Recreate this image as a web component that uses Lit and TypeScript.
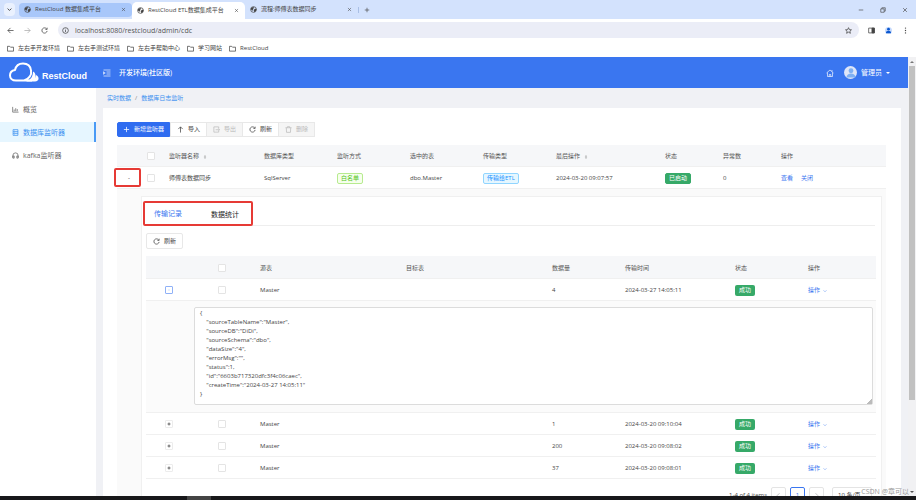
import { LitElement, html, css, svg, nothing } from "lit";
import { customElement } from "lit/decorators.js";
import { classMap } from "lit/directives/class-map.js";

const paths: Record<string, unknown> = {
  down: svg`<path d="M2 5l6 6 6-6"/>`,
  close: svg`<path d="M3 3l10 10M13 3L3 13"/>`,
  plus: svg`<path d="M8 2v12M2 8h12"/>`,
  minus: svg`<path d="M2 8h12"/>`,
  restore: svg`<path d="M2 5h9v9H2zM5 5V2h9v9h-3"/>`,
  back: svg`<path d="M15 8H2M8 2L2 8l6 6"/>`,
  forward: svg`<path d="M1 8h13M8 2l6 6-6 6"/>`,
  up: svg`<path d="M8 15V2M3 7l5-5 5 5"/>`,
  reload: svg`<path d="M13 4.500A6 6 0 1 0 14 9M14 1.500v4h-4"/>`,
  info: svg`<circle cx="8" cy="8" r="6.500"/><path d="M8 7v4.500M8 4v1.500"/>`,
  star: svg`<path d="M8 1.500l2 4.500 4.800.400-3.600 3.200 1.100 4.800L8 11.800l-4.300 2.600 1.100-4.800L1.200 6.400 6 6z"/>`,
  panel: svg`<path d="M1.500 2.500h13v11h-13z"/><path d="M9 2.500h5.500v11H9z" fill="currentColor"/>`,
  dots: svg`<g fill="currentColor" stroke="none"><circle cx="8" cy="2.500" r="1.600"/><circle cx="8" cy="8" r="1.600"/><circle cx="8" cy="13.500" r="1.600"/></g>`,
  folder: svg`<path d="M1 3h5l2 2h7v9H1z"/>`,
  globe: svg`<circle cx="8" cy="8" r="6.500"/><path fill="currentColor" stroke="none" d="M2 5l5-3 2 1-1 3-2 1 2 2-1 2-3-2-2-1zM10 7l5-1-1 5-4 3-1-3z"/>`,
  user: svg`<g fill="currentColor" stroke="none"><circle cx="8" cy="5" r="3.200"/><path d="M2 14c0-7 12-7 12 0z"/></g>`,
  indent: svg`<path d="M1 2h14M7 6h8M7 10h8M1 14h14M1 5.500L4.500 8 1 10.500z"/>`,
  home: svg`<path d="M1 8l7-6 7 6M3 7v8h10V7M6.500 15v-4h3v4M12 5V2"/>`,
  chart: svg`<path d="M1.500 2v12H15M5 12V8M8.500 12V5M12 12V7"/>`,
  db: svg`<path d="M2.500 1.500h11v13h-11zM2.500 6h11M2.500 10h11M5 4h1M5 8h1M5 12.500h1"/>`,
  headset: svg`<path d="M2 13V8a6 6 0 0 1 12 0v5M2 9h3v5H2zM11 9h3v5h-3z"/>`,
  exporter: svg`<path d="M13 6V2H2v12h11v-3M6 8.500h9M12.500 6L15 8.500 12.500 11"/>`,
  trash: svg`<path d="M1 4h14M5.500 4V1.500h5V4M3 4l.500 10.500h9L13 4"/>`,
  sort: svg`<g fill="currentColor" stroke="none"><path d="M3 6l5-5 5 5zM3 10l5 5 5-5z"/></g>`,
  left: svg`<path d="M10 3L5 8l5 5"/>`,
  right: svg`<path d="M6 3l5 5-5 5"/>`,
};

const icon = (name: string) =>
  html`<svg class="icon" viewBox="0 0 16 16" aria-hidden="true">${paths[name]}</svg>`;

const shared = css`
  * {
    box-sizing: border-box;
  }
  button,
  input,
  select,
  textarea {
    font: inherit;
    color: inherit;
    margin: 0;
    padding: 0;
    border: 0;
    background: none;
  }
  a {
    color: inherit;
    text-decoration: none;
  }
  .icon {
    width: 7px;
    height: 7px;
    flex: none;
    fill: none;
    stroke: currentColor;
    stroke-width: 1.7;
    display: block;
  }
`;

@customElement("browser-chrome")
class BrowserChrome extends LitElement {
  static styles = [
    shared,
    css`
      :host {
        display: block;
        background: #fff;
        color: #444;
      }
      .strip {
        display: flex;
        align-items: center;
        height: 19px;
        background: #d3e2fd;
        padding: 0 8px 0 4px;
      }
      .strip button,
      .bar button {
        display: flex;
        align-items: center;
        justify-content: center;
      }
      .menu {
        width: 11px;
        height: 13px;
        border-radius: 4px;
        background: #eaf1fe;
        margin-right: 4px;
      }
      .menu .icon {
        width: 5px;
        height: 5px;
        stroke-width: 3;
      }
      .tab {
        display: flex;
        align-items: center;
        gap: 4px;
        width: 113px;
        height: 14px;
        padding: 0 6px 0 5px;
        border-radius: 4px;
        white-space: nowrap;
      }
      .tab.lit {
        background: #a8c7fa;
      }
      .tab.active {
        height: 17px;
        background: #fff;
        border-radius: 5px 5px 0 0;
        align-self: flex-end;
        padding-bottom: 1px;
      }
      .tab span {
        flex: 1;
      }
      .tab button .icon {
        width: 5px;
        height: 5px;
      }
      .new {
        border-left: 1px solid #a9bfe6;
        padding-left: 5px;
      }
      .new .icon,
      .win .icon {
        width: 6px;
        height: 6px;
      }
      .win {
        display: flex;
        gap: 16px;
        margin-left: auto;
      }
      .bar {
        display: flex;
        align-items: center;
        height: 22px;
        padding: 0 7px;
      }
      .nav {
        display: flex;
        gap: 10px;
        margin-right: 10px;
      }
      .off {
        color: #aaa;
      }
      .pill {
        flex: 1;
        display: flex;
        align-items: center;
        gap: 6px;
        height: 16px;
        padding: 0 7px 0 4px;
        border-radius: 8px;
        background: #ebedf7;
        margin-right: 9px;
      }
      .pill input {
        flex: 1;
        min-width: 0;
        font-size: 7px;
        color: #555;
        outline: 0;
      }
      .tools {
        display: flex;
        gap: 10px;
      }
      .me {
        color: #0b57d0;
        background: #c6dafc;
        border-radius: 4px;
      }
      .marks {
        display: flex;
        align-items: center;
        gap: 7px;
        height: 16px;
        padding: 0 7px 1px;
      }
      .marks a {
        display: flex;
        align-items: center;
        gap: 4px;
        white-space: nowrap;
      }
    `,
  ];

  render() {
    const tabs = [
      ["RestCloud 数据集成平台", "lit"],
      ["RestCloud ETL数据集成平台", "active"],
      ["流程:师傅表数据同步", ""],
    ];
    const marks = ["左右手开发环境", "左右手测试环境", "左右手帮助中心", "学习网站", "RestCloud"];
    return html`
      <div class="strip">
        <button class="menu" aria-label="搜索标签页">${icon("down")}</button>
        ${tabs.map(
          ([t, c]) => html`<div class="tab ${c}">
            ${icon("globe")}<span>${t}</span><button aria-label="关闭标签页">${icon("close")}</button>
          </div>`,
        )}
        <button class="new" aria-label="新标签页">${icon("plus")}</button>
        <div class="win">
          <button aria-label="最小化">${icon("minus")}</button>
          <button aria-label="还原">${icon("restore")}</button>
          <button aria-label="关闭">${icon("close")}</button>
        </div>
      </div>
      <div class="bar">
        <div class="nav">
          <button aria-label="后退">${icon("back")}</button>
          <button class="off" aria-label="前进">${icon("forward")}</button>
          <button aria-label="刷新">${icon("reload")}</button>
        </div>
        <div class="pill">
          ${icon("info")}
          <input aria-label="地址" .value=${"localhost:8080/restcloud/admin/cdc"} />
          <button aria-label="收藏">${icon("star")}</button>
        </div>
        <div class="tools">
          <button aria-label="侧边栏">${icon("panel")}</button>
          <button class="me" aria-label="用户">${icon("user")}</button>
          <button aria-label="更多">${icon("dots")}</button>
        </div>
      </div>
      <nav class="marks">${marks.map((m) => html`<a href="#">${icon("folder")}${m}</a>`)}</nav>
    `;
  }
}

@customElement("transfer-records")
class TransferRecords extends LitElement {
  static styles = [
    shared,
    css`
      :host {
        display: block;
        background: #fff;
        border: 1px solid #f0f0f0;
        padding: 0 6px 8px 4px;
      }
      .tabs {
        position: relative;
        display: flex;
        gap: 13px;
        height: 29px;
        border-bottom: 1px solid #eee;
        font-size: 7px;
      }
      .tabs button {
        padding: 5px 8px 0;
        height: 29px;
        color: #222;
      }
      .tabs .on {
        color: #3a76f0;
        border-bottom: 1px solid #3a76f0;
      }
      .mark {
        position: absolute;
        left: -3px;
        top: 4px;
        width: 110px;
        height: 25px;
        border: 2px solid #e63a35;
        border-radius: 2px;
        pointer-events: none;
      }
      .refresh {
        display: flex;
        align-items: center;
        gap: 4px;
        height: 16px;
        padding: 0 6px;
        margin: 7px 0;
        border: 1px solid #e8e8e8;
        border-radius: 2px;
      }
      table {
        width: 100%;
        table-layout: fixed;
        border-collapse: separate;
        border-spacing: 0;
      }
      th,
      td {
        height: 22px;
        padding: 2px 8px 0;
        text-align: left;
        font-weight: 400;
        border-bottom: 1px solid #f0f0f0;
      }
      th {
        height: 23px;
        background: #f6f7f9;
        color: #555;
      }
      .c {
        text-align: center;
        padding: 2px 0 0;
      }
      .w1 { width: 46px; }
      .w2 { width: 60px; }
      .w3 { width: 146px; }
      .w4 { width: 73px; }
      .w5 { width: 110px; }
      .w6 { width: 76px; }
      input[type="checkbox"] {
        appearance: none;
        width: 8px;
        height: 8px;
        border: 1px solid #e4e4e4;
        border-radius: 1px;
        background: #fff;
        vertical-align: middle;
      }
      .exp {
        display: inline-flex;
        align-items: center;
        justify-content: center;
        width: 8px;
        height: 8px;
        border: 1px solid #ececec;
        border-radius: 1px;
        vertical-align: middle;
      }
      .exp.open {
        border-color: #8fb1f7;
        color: #6a96f4;
      }
      .exp .icon {
        width: 4px;
        height: 4px;
        stroke-width: 3;
      }
      .exp.open .icon {
        width: 2px;
      }
      .tag {
        display: inline-block;
        height: 11px;
        line-height: 11px;
        padding: 0 4px;
        border-radius: 2px;
        background: #36a968;
        color: #fff;
        vertical-align: middle;
      }
      .op {
        display: inline-flex;
        align-items: center;
        gap: 3px;
        color: #3a76f0;
      }
      .op .icon {
        width: 4px;
        height: 4px;
      }
      .detail {
        background: #fbfbfb;
        padding: 6px 3px 7px 48px;
        height: 112px;
      }
      textarea {
        display: block;
        width: 100%;
        height: 98px;
        padding: 1px 5px;
        line-height: 9px;
        border: 1px solid #dcdcdc;
        border-radius: 2px;
        background: #fff;
        outline: 0;
        overflow: hidden;
      }
      textarea::-webkit-resizer {
        background: linear-gradient(135deg, transparent 82%, #bbb 82%);
      }
      .pager {
        display: flex;
        justify-content: flex-end;
        align-items: center;
        gap: 4px;
        margin-top: 8px;
        padding-right: 3px;
      }
      .pager button {
        display: flex;
        align-items: center;
        justify-content: center;
        width: 15px;
        height: 16px;
        border: 1px solid #e4e4e4;
        border-radius: 2px;
        color: #aaa;
      }
      .pager .cur {
        border-color: #3a76f0;
        color: #3a76f0;
      }
      .pager select {
        appearance: none;
        width: 40px;
        height: 16px;
        padding: 0 5px;
        margin-left: 4px;
        border: 1px solid #e4e4e4;
        border-radius: 2px;
      }
    `,
  ];

  private record = `{
    "sourceTableName":"Master",
    "sourceDB":"DiDi",
    "sourceSchema":"dbo",
    "dataSize":"4",
    "errorMsg":"",
    "status":1,
    "id":"6603b717320dfc3f4c06caec",
    "createTime":"2024-03-27 14:05:11"
}`;

  private rows = [
    { n: 4, time: "2024-03-27 14:05:11", open: true },
    { n: 1, time: "2024-03-20 09:10:04", open: false },
    { n: 200, time: "2024-03-20 09:08:02", open: false },
    { n: 37, time: "2024-03-20 09:08:01", open: false },
  ];

  render() {
    return html`
      <div class="tabs" role="tablist">
        <button class="on" role="tab" aria-selected="true">传输记录</button>
        <button role="tab" aria-selected="false">数据统计</button>
        <span class="mark"></span>
      </div>
      <button class="refresh">${icon("reload")}刷新</button>
      <table>
        <thead>
          <tr>
            <th class="w1"></th>
            <th class="w2 c"><input type="checkbox" aria-label="全选" /></th>
            <th class="w3">源表</th>
            <th class="w3">目标表</th>
            <th class="w4">数据量</th>
            <th class="w5">传输时间</th>
            <th class="w4">状态</th>
            <th class="w6">操作</th>
          </tr>
        </thead>
        <tbody>
          ${this.rows.map(
            (r) => html`<tr>
                <td class="c">
                  <button class=${classMap({ exp: true, open: r.open })} aria-label="展开">
                    ${icon(r.open ? "minus" : "plus")}
                  </button>
                </td>
                <td class="c"><input type="checkbox" aria-label="选择" /></td>
                <td>Master</td>
                <td></td>
                <td>${r.n}</td>
                <td>${r.time}</td>
                <td><span class="tag">成功</span></td>
                <td><a class="op" href="#">操作 ${icon("down")}</a></td>
              </tr>
              ${r.open
                ? html`<tr>
                    <td class="detail" colspan="8">
                      <textarea aria-label="记录内容" .value=${this.record}></textarea>
                    </td>
                  </tr>`
                : nothing}`,
          )}
        </tbody>
      </table>
      <div class="pager">
        <span>1-4 of 4 items</span>
        <button aria-label="上一页">${icon("left")}</button>
        <button class="cur">1</button>
        <button aria-label="下一页">${icon("right")}</button>
        <select aria-label="每页条数"><option>10 条/页</option></select>
      </div>
    `;
  }
}

@customElement("listener-table")
class ListenerTable extends LitElement {
  static styles = [
    shared,
    css`
      :host {
        display: block;
      }
      .actions {
        display: flex;
        margin-bottom: 8px;
      }
      .actions button {
        display: flex;
        align-items: center;
        gap: 4px;
        height: 15px;
        padding: 0 6px;
        border: 1px solid #e8e8e8;
        margin-right: -1px;
        background: #fff;
        white-space: nowrap;
      }
      .actions .primary {
        margin: 0;
        padding: 0 5px;
        background: #2f6cf0;
        border-color: #2f6cf0;
        color: #fff;
        border-radius: 2px 0 0 2px;
      }
      .actions button:disabled {
        background: #f5f5f5;
        color: #bbb;
      }
      table {
        width: 100%;
        table-layout: fixed;
        border-collapse: separate;
        border-spacing: 0;
      }
      th,
      td {
        height: 22px;
        padding: 2px 8px 0;
        text-align: left;
        font-weight: 400;
        border-bottom: 1px solid #f0f0f0;
        white-space: nowrap;
      }
      th {
        background: #f6f7f9;
        color: #555;
      }
      .sort {
        display: inline-flex;
        align-items: center;
        gap: 4px;
      }
      .sort .icon {
        width: 4px;
        height: 6px;
        color: #999;
      }
      .w1 { width: 24px; }
      .w2 { width: 20px; }
      .w3 { width: 95px; }
      .w4 { width: 73px; }
      .w5 { width: 109px; }
      .w6 { width: 58px; }
      .w7 { width: 113px; }
      .c {
        position: relative;
        padding: 2px 0 0;
        text-align: center;
      }
      .mark {
        position: absolute;
        left: -3px;
        top: 1px;
        width: 27px;
        height: 19px;
        border: 2px solid #e63a35;
        border-radius: 2px;
        pointer-events: none;
      }
      .exp {
        width: 8px;
        height: 8px;
        line-height: 8px;
        color: #222;
      }
      input[type="checkbox"] {
        appearance: none;
        width: 8px;
        height: 8px;
        border: 1px solid #e4e4e4;
        border-radius: 1px;
        background: #fff;
        vertical-align: middle;
      }
      .tag {
        display: inline-block;
        height: 11px;
        line-height: 9px;
        padding: 0 3px;
        border: 1px solid;
        border-radius: 2px;
        vertical-align: middle;
      }
      .green {
        color: #52c41a;
        background: #f6ffed;
        border-color: #b7eb8f;
      }
      .blue {
        color: #1890ff;
        background: #e6f7ff;
        border-color: #91d5ff;
      }
      .solid {
        color: #fff;
        background: #36a968;
        border-color: #36a968;
      }
      .ops a {
        color: #3a76f0;
        margin-right: 8px;
      }
      .nest {
        background: #fafafa;
        padding: 7px 4px 7px 24px;
        white-space: normal;
      }
    `,
  ];

  render() {
    return html`
      <div class="actions">
        <button class="primary">${icon("plus")}新增监听器</button>
        <button>${icon("up")}导入</button>
        <button disabled>${icon("exporter")}导出</button>
        <button>${icon("reload")}刷新</button>
        <button disabled>${icon("trash")}删除</button>
      </div>
      <table>
        <thead>
          <tr>
            <th class="w1"></th>
            <th class="w2 c"><input type="checkbox" aria-label="全选" /></th>
            <th class="w3"><span class="sort">监听器名称 ${icon("sort")}</span></th>
            <th class="w4">数据库类型</th>
            <th class="w4">监听方式</th>
            <th class="w4">选中的表</th>
            <th class="w4">传输类型</th>
            <th class="w5"><span class="sort">最后操作 ${icon("sort")}</span></th>
            <th class="w6">状态</th>
            <th class="w6">异常数</th>
            <th class="w7">操作</th>
          </tr>
        </thead>
        <tbody>
          <tr>
            <td class="c">
              <button class="exp" aria-label="收起">-</button><span class="mark"></span>
            </td>
            <td class="c"><input type="checkbox" aria-label="选择" /></td>
            <td>师傅表数据同步</td>
            <td>SqlServer</td>
            <td><span class="tag green">白名单</span></td>
            <td>dbo.Master</td>
            <td><span class="tag blue">传输给ETL</span></td>
            <td>2024-03-20 09:07:57</td>
            <td><span class="tag solid">已启动</span></td>
            <td>0</td>
            <td class="ops"><a href="#">查看</a><a href="#">关闭</a></td>
          </tr>
          <tr>
            <td class="nest" colspan="11"><transfer-records></transfer-records></td>
          </tr>
        </tbody>
      </table>
    `;
  }
}

@customElement("app-root")
class AppRoot extends LitElement {
  static styles = [
    shared,
    css`
      :host {
        display: flex;
        flex-direction: column;
        height: 100vh;
        overflow: hidden;
        position: relative;
        font: 6px/9px "Open Sans", "Noto Sans CJK SC", sans-serif;
        color: #444;
        background: #fff;
      }
      browser-chrome {
        flex: none;
      }
      .view {
        flex: 1;
        min-height: 0;
        display: flex;
      }
      .page {
        flex: 1;
        min-width: 0;
        display: flex;
        flex-direction: column;
      }
      header {
        flex: none;
        height: 31px;
        display: flex;
        align-items: center;
        padding: 0 18px 0 9px;
        background: #3a76f0;
        color: #fff;
        font-size: 7px;
      }
      .logo {
        display: flex;
        align-items: center;
        gap: 3px;
        width: 94px;
        font: 700 9px/12px "Liberation Sans", sans-serif;
      }
      .name {
        padding-top: 6px;
      }
      .cloud {
        width: 30px;
        height: 22px;
      }
      header .icon {
        width: 8px;
        height: 8px;
        stroke-width: 1.3;
      }
      .env {
        margin-left: 8px;
        font-weight: 500;
      }
      .who {
        display: flex;
        align-items: center;
        gap: 5px;
        margin-left: auto;
      }
      .who button {
        display: flex;
        align-items: center;
        gap: 4px;
      }
      .face {
        display: flex;
        align-items: flex-end;
        justify-content: center;
        width: 13px;
        height: 13px;
        border-radius: 50%;
        background: #dfe6f8;
        color: #7fb0f3;
        margin-left: 5px;
      }
      .face .icon {
        width: 12px;
        height: 12px;
      }
      .caret {
        border: 2px solid transparent;
        border-top-color: #fff;
        border-bottom: 0;
      }
      .body {
        flex: 1;
        min-height: 0;
        display: flex;
      }
      aside {
        flex: none;
        width: 96px;
        display: flex;
        flex-direction: column;
        gap: 3px;
        padding-top: 11px;
        font-size: 7px;
      }
      aside a {
        display: flex;
        align-items: center;
        gap: 4px;
        height: 20px;
        padding-left: 12px;
        color: #666;
      }
      aside .on {
        background: #e6f6ff;
        color: #3a8ff0;
        border-right: 2px solid #4a9af5;
      }
      main {
        flex: 1;
        min-width: 0;
        overflow: hidden;
        background: #f0f1f5;
        padding: 0 7px;
      }
      .crumbs {
        display: flex;
        align-items: center;
        gap: 4px;
        height: 20px;
        padding-left: 4px;
        color: #3a8ff0;
      }
      .crumbs span {
        color: #888;
      }
      .card {
        background: #fff;
        padding: 14px 15px 14px 14px;
      }
      .scroll {
        flex: none;
        width: 8px;
        background: #f1f1f3;
        display: flex;
        flex-direction: column;
        align-items: center;
      }
      .tip {
        border: 2px solid transparent;
        border-bottom-color: #777;
        border-top: 0;
        margin: 4px 0 3px;
      }
      .end {
        border: 2px solid transparent;
        border-top-color: #555;
        border-bottom: 0;
        margin: auto 0 3px;
      }
      .thumb {
        width: 6px;
        height: 76%;
        background: #c1c1c1;
      }
      footer {
        flex: none;
        height: 4px;
        background: #18181a;
      }
      .running {
        width: 24px;
        height: 4px;
        margin-left: 187px;
        background: #444;
      }
      .sign {
        position: absolute;
        right: 7px;
        bottom: 4px;
        font-size: 7px;
        color: #999;
      }
    `,
  ];

  render() {
    return html`
      <browser-chrome></browser-chrome>
      <div class="view">
        <div class="page">
          <header>
            <div class="logo">
              <svg class="cloud" viewBox="0 0 30 22" aria-hidden="true">
                <path
                  d="M23 18.500H7C3 18.500 1 16 1 13.500 1 10.500 3 8.500 6 8 7 3.500 10 1.500 14 1.500 18.500 1.500 21.500 4 22 8.500 23 13 20 17 15 18.500"
                  fill="none" stroke="#fff" stroke-width="2" stroke-linejoin="round"
                />
                <path d="M17 19.500C22 18 24 14 24 9.500 27 11 27 14 26 19.500zM24 19.500C26 18 27 16 27 13 31 15 30 19.500 26 19.500z" fill="#fff" />
              </svg>
              <span class="name">RestCloud</span>
            </div>
            <span>${icon("indent")}</span>
            <span class="env">开发环境(社区版)</span>
            <div class="who">
              <button aria-label="首页">${icon("home")}</button>
              <button><span class="face">${icon("user")}</span>管理员<i class="caret"></i></button>
            </div>
          </header>
          <div class="body">
            <aside>
              <a href="#">${icon("chart")}概览</a>
              <a class="on" href="#">${icon("db")}数据库监听器</a>
              <a href="#">${icon("headset")}kafka监听器</a>
            </aside>
            <main>
              <nav class="crumbs">
                <a href="#">实时数据</a><span>/</span><a href="#">数据库日志监听</a>
              </nav>
              <section class="card"><listener-table></listener-table></section>
            </main>
          </div>
        </div>
        <div class="scroll"><i class="tip"></i><i class="thumb"></i><i class="end"></i></div>
      </div>
      <footer><div class="running"></div></footer>
      <span class="sign">CSDN @章可以</span>
    `;
  }
}
